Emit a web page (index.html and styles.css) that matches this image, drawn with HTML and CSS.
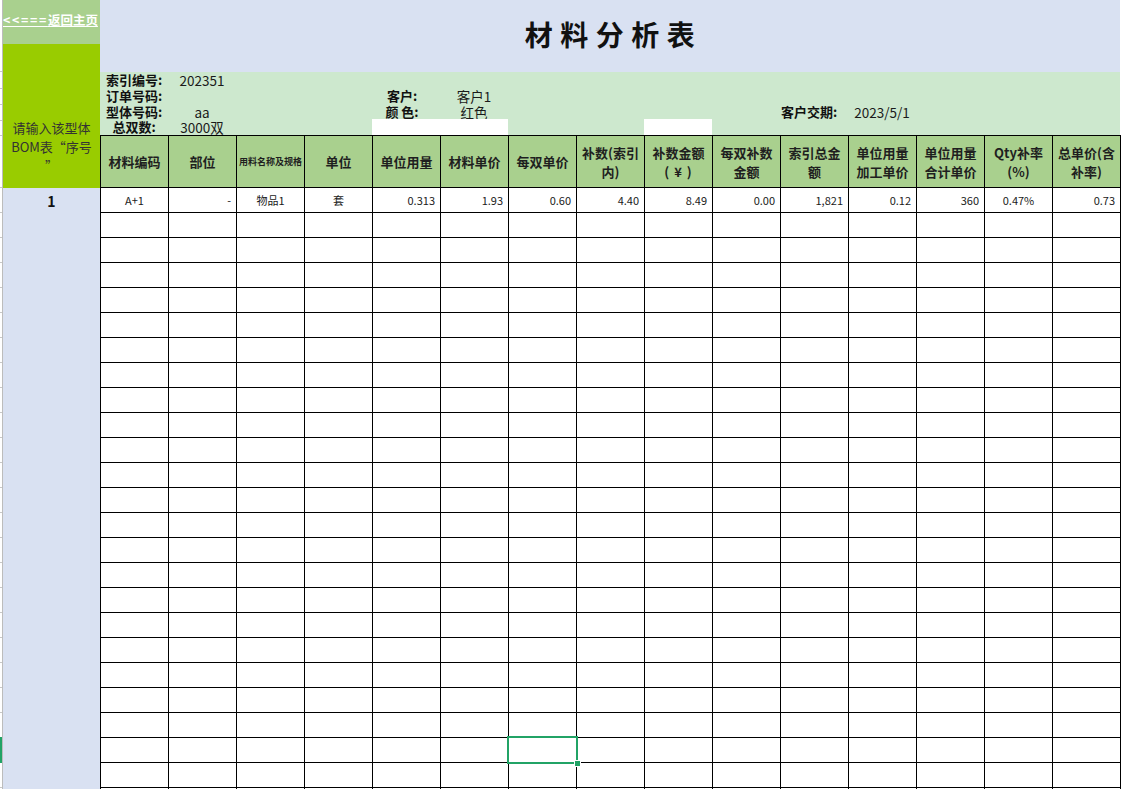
FILE: index.html
```html
<!DOCTYPE html>
<html lang="zh-CN">
<head>
<meta charset="utf-8">
<title>材料分析表</title>
<link rel="stylesheet" href="styles.css">
</head>
<body>
<div class="sheet">
  <div class="strip"></div>
  <div class="lcol">
    <div class="back"><a href="#"><span class="arr">&lt;&lt;===</span>返回主页</a></div>
    <div class="prompt"><p>请输入该型体<br>BOM表“序号<br>”</p></div>
    <div class="idx"><div class="idxcell">1</div></div>
  </div>
  <div class="main">
    <div class="title"><h1>材料分析表</h1></div>
    <div class="info">
      <div class="lab r1 c1">索引编号:</div><div class="val r1 c2">202351</div>
      <div class="lab r2 c1">订单号码:</div>
      <div class="lab r2 c5 shift">客户:</div><div class="val r2 c6">客户1</div>
      <div class="lab r3 c1">型体号码:</div><div class="val r3 c2">aa</div>
      <div class="lab r3 c5 shift">颜 色:</div><div class="val r3 c6">红色</div>
      <div class="lab r3 c11 shift2">客户交期:</div><div class="val r3 c12">2023/5/1</div>
      <div class="lab r4 c1">总双数:</div><div class="val r4 c2">3000双</div>
      <div class="blank r4 c5 span2"></div>
      <div class="blank r4 c9"></div>
    </div>
    <div class="grid">
      <div class="h"><span>材料编码</span></div>
      <div class="h"><span>部位</span></div>
      <div class="h tiny"><span>用料名称及规格</span></div>
      <div class="h"><span>单位</span></div>
      <div class="h"><span>单位用量</span></div>
      <div class="h"><span>材料单价</span></div>
      <div class="h"><span>每双单价</span></div>
      <div class="h"><span>补数(索引<br>内)</span></div>
      <div class="h"><span>补数金额<br><span class="yen">( ¥ )</span></span></div>
      <div class="h"><span>每双补数<br>金额</span></div>
      <div class="h"><span>索引总金<br>额</span></div>
      <div class="h"><span>单位用量<br>加工单价</span></div>
      <div class="h"><span>单位用量<br>合计单价</span></div>
      <div class="h"><span>Qty补率<br>(%)</span></div>
      <div class="h"><span>总单价(含<br>补率)</span></div>

      <div class="d c">A+1</div>
      <div class="d">-</div>
      <div class="d c">物品1</div>
      <div class="d c">套</div>
      <div class="d">0.313</div>
      <div class="d">1.93</div>
      <div class="d">0.60</div>
      <div class="d">4.40</div>
      <div class="d">8.49</div>
      <div class="d">0.00</div>
      <div class="d">1,821</div>
      <div class="d">0.12</div>
      <div class="d">360</div>
      <div class="d c">0.47%</div>
      <div class="d">0.73</div>

      <span></span><span></span><span></span><span></span><span></span><span></span><span></span><span></span><span></span><span></span><span></span><span></span><span></span><span></span><span></span>
      <span></span><span></span><span></span><span></span><span></span><span></span><span></span><span></span><span></span><span></span><span></span><span></span><span></span><span></span><span></span>
      <span></span><span></span><span></span><span></span><span></span><span></span><span></span><span></span><span></span><span></span><span></span><span></span><span></span><span></span><span></span>
      <span></span><span></span><span></span><span></span><span></span><span></span><span></span><span></span><span></span><span></span><span></span><span></span><span></span><span></span><span></span>
      <span></span><span></span><span></span><span></span><span></span><span></span><span></span><span></span><span></span><span></span><span></span><span></span><span></span><span></span><span></span>
      <span></span><span></span><span></span><span></span><span></span><span></span><span></span><span></span><span></span><span></span><span></span><span></span><span></span><span></span><span></span>
      <span></span><span></span><span></span><span></span><span></span><span></span><span></span><span></span><span></span><span></span><span></span><span></span><span></span><span></span><span></span>
      <span></span><span></span><span></span><span></span><span></span><span></span><span></span><span></span><span></span><span></span><span></span><span></span><span></span><span></span><span></span>
      <span></span><span></span><span></span><span></span><span></span><span></span><span></span><span></span><span></span><span></span><span></span><span></span><span></span><span></span><span></span>
      <span></span><span></span><span></span><span></span><span></span><span></span><span></span><span></span><span></span><span></span><span></span><span></span><span></span><span></span><span></span>
      <span></span><span></span><span></span><span></span><span></span><span></span><span></span><span></span><span></span><span></span><span></span><span></span><span></span><span></span><span></span>
      <span></span><span></span><span></span><span></span><span></span><span></span><span></span><span></span><span></span><span></span><span></span><span></span><span></span><span></span><span></span>
      <span></span><span></span><span></span><span></span><span></span><span></span><span></span><span></span><span></span><span></span><span></span><span></span><span></span><span></span><span></span>
      <span></span><span></span><span></span><span></span><span></span><span></span><span></span><span></span><span></span><span></span><span></span><span></span><span></span><span></span><span></span>
      <span></span><span></span><span></span><span></span><span></span><span></span><span></span><span></span><span></span><span></span><span></span><span></span><span></span><span></span><span></span>
      <span></span><span></span><span></span><span></span><span></span><span></span><span></span><span></span><span></span><span></span><span></span><span></span><span></span><span></span><span></span>
      <span></span><span></span><span></span><span></span><span></span><span></span><span></span><span></span><span></span><span></span><span></span><span></span><span></span><span></span><span></span>
      <span></span><span></span><span></span><span></span><span></span><span></span><span></span><span></span><span></span><span></span><span></span><span></span><span></span><span></span><span></span>
      <span></span><span></span><span></span><span></span><span></span><span></span><span></span><span></span><span></span><span></span><span></span><span></span><span></span><span></span><span></span>
      <span></span><span></span><span></span><span></span><span></span><span></span><span></span><span></span><span></span><span></span><span></span><span></span><span></span><span></span><span></span>
      <span></span><span></span><span></span><span></span><span></span><span></span><span></span><span></span><span></span><span></span><span></span><span></span><span></span><span></span><span></span>
      <span></span><span></span><span></span><span></span><span></span><span></span><span class="sel"></span><span></span><span></span><span></span><span></span><span></span><span></span><span></span><span></span>
      <span></span><span></span><span></span><span></span><span></span><span></span><span></span><span></span><span></span><span></span><span></span><span></span><span></span><span></span><span></span>
      <span></span><span></span><span></span><span></span><span></span><span></span><span></span><span></span><span></span><span></span><span></span><span></span><span></span><span></span><span></span>
    </div>
  </div>
</div>
</body>
</html>
```

FILE: styles.css
```css
* { box-sizing: border-box; margin: 0; padding: 0; }
html, body { width: 1123px; height: 789px; overflow: hidden; background: #fff; }
body {
  font-family: "Noto Sans CJK SC", "Noto Sans", "Liberation Sans", sans-serif;
  color: #1a1a1a;
}
.sheet { display: flex; height: 789px; }

/* row-header sliver at far left */
.strip {
  width: 3px;
  flex: none;
  border-right: 1px solid #bcbcbc;
  background:
    linear-gradient(#21a366, #21a366) 0 737px / 2px 26px no-repeat,
    repeating-linear-gradient(to bottom, transparent 0 24px, #c8c8c8 24px 25px) 0 188px / 2px 625px no-repeat,
    linear-gradient(#c8c8c8, #c8c8c8) 0 71px / 2px 1px no-repeat,
    linear-gradient(#c8c8c8, #c8c8c8) 0 88px / 2px 1px no-repeat,
    linear-gradient(#c8c8c8, #c8c8c8) 0 104px / 2px 1px no-repeat,
    linear-gradient(#c8c8c8, #c8c8c8) 0 120px / 2px 1px no-repeat,
    linear-gradient(#c8c8c8, #c8c8c8) 0 135px / 2px 1px no-repeat,
    linear-gradient(#c8c8c8, #c8c8c8) 0 187px / 2px 1px no-repeat,
    #fff;
}

/* left column */
.lcol { width: 97px; flex: none; display: flex; flex-direction: column; }
.back {
  height: 44px;
  background: #a9d08e;
  padding: 11px 0 0 0;
  font-size: 12.5px;
  line-height: 18px;
  font-weight: 700;
  white-space: nowrap;
  overflow: hidden;
}
.back a { color: #fff; text-decoration: underline; }
.back .arr { letter-spacing: 1.6px; }
.prompt {
  height: 144px;
  background: #99cc00;
  display: flex;
  align-items: flex-end;
  justify-content: center;
  text-align: center;
  font-size: 13px;
  line-height: 19px;
  color: #333;
  padding-bottom: 13px;
}
.idx { flex: 1; background: #d9e1f2; }
.idxcell {
  height: 25px;
  display: flex;
  align-items: center;
  justify-content: center;
  font-weight: 700;
  font-size: 14px;
  color: #111;
}

/* main area */
.main { width: 1023px; flex: none; }
.title {
  height: 72px;
  width: 1020px;
  background: #d9e1f2;
  display: flex;
  align-items: center;
  justify-content: center;
}
.title h1 {
  font-size: 28px;
  font-weight: 700;
  letter-spacing: 7.5px;
  padding-left: 7px;
  color: #111;
  line-height: 34px;
  margin-top: -4px;
}

.info {
  height: 63px;
  width: 1020px;
  background: #cde8ce;
  display: grid;
  grid-template-columns: repeat(15, 68px);
  grid-template-rows: 16px 16px 15px 16px;
}
.lab, .val {
  font-size: 13px;
  line-height: 16px;
  text-align: center;
  white-space: nowrap;
}
.lab { font-weight: 700; color: #111; }
.val { color: #1a1a1a; font-size: 13.5px; }
.shift { padding-right: 8px; }
.shift2 { padding-right: 10px; }
.blank { background: #fff; }
.r1 { grid-row: 1; } .r2 { grid-row: 2; } .r3 { grid-row: 3; } .r4 { grid-row: 4; }
.c1 { grid-column: 1; } .c2 { grid-column: 2; } .c5 { grid-column: 5; }
.c6 { grid-column: 6; } .c9 { grid-column: 9; } .c11 { grid-column: 11; }
.c12 { grid-column: 12; }
.span2 { grid-column-end: span 2; }

/* table */
.grid {
  width: 1021px;
  display: grid;
  grid-template-columns: repeat(15, 68px);
  grid-template-rows: 52px;
  grid-auto-rows: 25px;
  border-left: 1px solid #000;
  border-top: 1px solid #000;
}
.grid > * {
  border-right: 1px solid #000;
  border-bottom: 1px solid #000;
}
.h {
  background: #a9d08e;
  display: flex;
  align-items: center;
  justify-content: center;
  text-align: center;
  font-weight: 700;
  font-size: 13px;
  line-height: 19px;
  color: #1f1f1f;
  white-space: nowrap;
}
.h.tiny { font-size: 9px; }
.yen { letter-spacing: 1px; }
.d {
  display: flex;
  align-items: center;
  justify-content: flex-end;
  padding: 0 5px;
  font-size: 11px;
  color: #1a1a1a;
  white-space: nowrap;
}
.d.c { justify-content: center; }

.sel { position: relative; }
.sel::after {
  content: "";
  position: absolute;
  left: -2px; top: -2px; right: -2px; bottom: -2px;
  border: 2px solid #21a366;
}
.sel::before {
  content: "";
  position: absolute;
  right: -5px; bottom: -5px;
  width: 5px; height: 5px;
  background: #21a366;
  border: 1px solid #fff;
  z-index: 1;
}
```
